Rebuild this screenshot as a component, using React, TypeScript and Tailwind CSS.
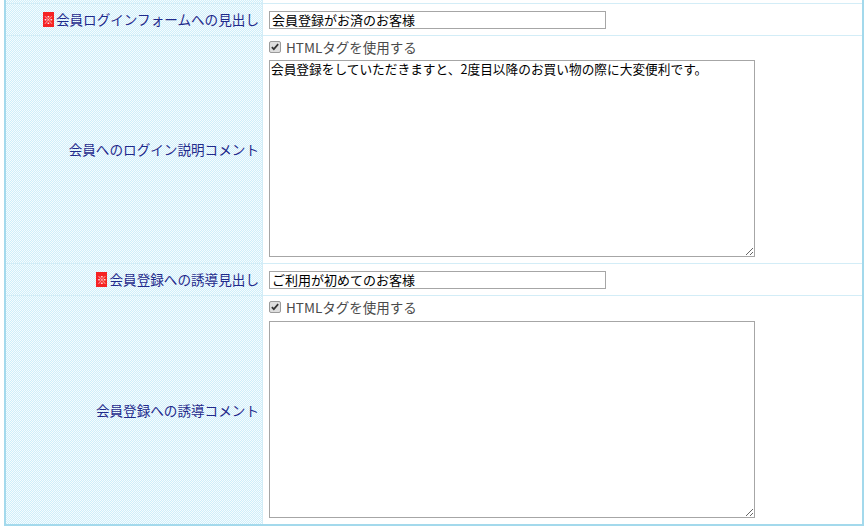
import React from 'react';

const font = { fontFamily: '"Noto Sans CJK JP", "Noto Sans", sans-serif' };

const labelBg =
  'bg-[repeating-conic-gradient(#cfeefa_0%_25%,#f6fcfe_0%_50%)] bg-[length:2px_2px]';

const Required = () => (
  <span className="mr-[2px] inline-flex h-[15px] w-[11px] items-center justify-center bg-[#f52323] text-[10px] leading-none text-white">
    ※
  </span>
);

const CheckLabel = () => (
  <label className="flex h-[20px] items-center gap-[5px] text-[13.5px] text-[#4a4a4a]">
    <span className="flex h-[12px] w-[12px] items-center justify-center rounded-[2px] border border-[#9a9a9a] bg-[#dedede]">
      <svg viewBox="0 0 12 12" className="h-[10px] w-[10px]">
        <path d="M2.2 6.2 L4.6 8.6 L9.8 2.6" fill="none" stroke="#333" strokeWidth="2" />
      </svg>
    </span>
    HTMLタグを使用する
  </label>
);

type RowProps = {
  label: string;
  required?: boolean;
  children: React.ReactNode;
  height: string;
};

const Row = ({ label, required, children, height }: RowProps) => (
  <div className={`flex border-t border-[#d3edf7] ${height}`}>
    <div
      className={`flex w-[257px] shrink-0 items-center justify-end border-r border-[#d3edf7] pr-[3px] text-[13.6px] text-[#1f2a8c] ${labelBg}`}
    >
      {required && <Required />}
      <span>{label}</span>
    </div>
    <div className="flex-1 bg-white pl-[6px]">{children}</div>
  </div>
);

export default function App() {
  return (
    <div className="h-[530px] w-[866px] bg-white" style={font}>
      <div className="ml-[4px] w-[860px] border-x-2 border-b-2 border-[#a3d9ec]">
        <div className="flex h-[3px]">
          <div className={`w-[257px] border-r border-[#d3edf7] ${labelBg}`} />
          <div className="flex-1 bg-white" />
        </div>

        <Row label="会員ログインフォームへの見出し" required height="h-[32px]">
          <div className="flex h-full items-center">
            <input
              className="h-[18px] w-[337px] border border-[#a6a6a6] px-[2px] text-[13px] text-black outline-none"
              defaultValue="会員登録がお済のお客様"
            />
          </div>
        </Row>

        <Row label="会員へのログイン説明コメント" height="h-[228px]">
          <div className="flex flex-col pt-[1px]">
            <CheckLabel />
            <textarea
              className="mt-[3px] h-[197px] w-[486px] border border-[#a6a6a6] px-[1px] text-[12.7px] leading-[16px] text-black outline-none"
              defaultValue="会員登録をしていただきますと、2度目以降のお買い物の際に大変便利です。"
            />
          </div>
        </Row>

        <Row label="会員登録への誘導見出し" required height="h-[32px]">
          <div className="flex h-full items-center">
            <input
              className="h-[18px] w-[337px] border border-[#a6a6a6] px-[2px] text-[13px] text-black outline-none"
              defaultValue="ご利用が初めてのお客様"
            />
          </div>
        </Row>

        <Row label="会員登録への誘導コメント" height="h-[229px]">
          <div className="flex flex-col pt-[1px]">
            <CheckLabel />
            <textarea
              className="mt-[4px] h-[197px] w-[486px] border border-[#a6a6a6] px-[1px] text-[12.7px] leading-[16px] text-black outline-none"
              defaultValue=""
            />
          </div>
        </Row>
      </div>
    </div>
  );
}
